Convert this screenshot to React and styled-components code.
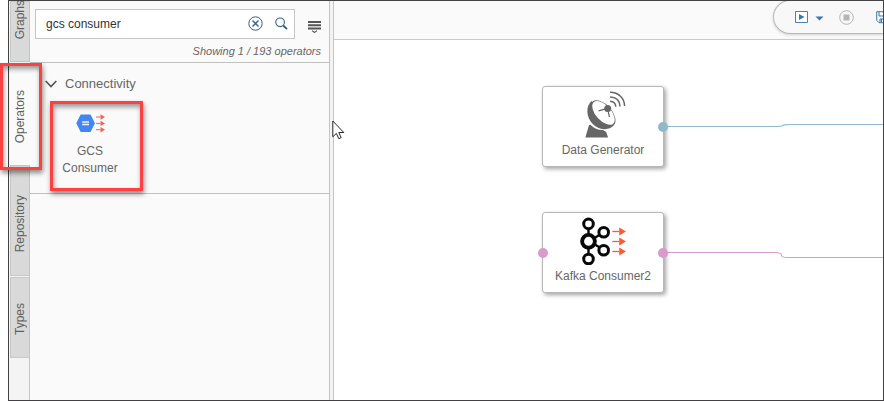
import React from "react";
import styled, { createGlobalStyle } from "styled-components";

const GlobalStyle = createGlobalStyle`
  * { box-sizing: border-box; }
  body { margin: 0; background: #fff; overflow: hidden; font-family: "Liberation Sans", Arial, sans-serif; color: #666; }
  svg { display: block; }
`;

const Page = styled.div`
  position: relative;
  width: 884px;
  height: 401px;
  padding-left: 8px;
  overflow: hidden;
`;

const Frame = styled.main`
  display: flex;
  height: 401px;
  border: 1px solid #434144;
  background: #fff;
  overflow: hidden;
`;

const TabRail = styled.nav`
  display: flex;
  flex-direction: column;
  width: 21px;
  padding-left: 1px;
  background: #f4f4f4;
  border-right: 1px solid #c4c4c4;
`;

const Tab = styled.div`
  display: flex;
  align-items: flex-end;
  justify-content: center;
  flex: none;
  height: ${(p) => p.$height}px;
  margin-bottom: ${(p) => p.$gap || 0}px;
  margin-right: ${(p) => (p.$active ? -1 : 0)}px;
  padding-bottom: ${(p) => p.$inset}px;
  background: ${(p) => (p.$active ? "#fafafa" : "#d9d9d9")};
  border: solid #c8c8c8;
  border-width: ${(p) => (p.$active ? "0" : "1px 0 1px 1px")};
  font-size: 12px;
  line-height: 19px;
  color: #5f5f5f;

  span { writing-mode: vertical-rl; transform: rotate(180deg); white-space: nowrap; }
`;

const Panel = styled.aside`
  display: flex;
  flex-direction: column;
  width: 299px;
  background: #fafafa;
`;

const PanelHeader = styled.header`
  height: 62px;
  padding: 8px 8px 0 5px;
  border-bottom: 1px solid #c0c0c0;
`;

const SearchRow = styled.div`
  display: flex;
  align-items: center;
`;

const SearchBox = styled.div`
  display: flex;
  align-items: center;
  width: 260px;
  height: 30px;
  padding: 0 6px 1px 10px;
  background: #fff;
  border: 1px solid #c6c6c6;
  font-size: 12px;
  color: #333;

  span { flex: 1; }
  svg + svg { margin-left: 11px; }
`;

const MenuButton = styled.div`
  margin: 5px 0 0 13px;
`;

const ResultCount = styled.div`
  margin-top: 5px;
  text-align: right;
  font-size: 11px;
  font-style: italic;
  line-height: 14px;
  white-space: nowrap;
`;

const Category = styled.section`
  height: 131px;
  border-bottom: 1px solid #c0c0c0;
`;

const CategoryTitle = styled.div`
  display: flex;
  align-items: center;
  height: 41px;
  padding-left: 15px;
  gap: 8px;
  font-size: 13px;
`;

const Operator = styled.div`
  display: flex;
  flex-direction: column;
  align-items: center;
  width: 82px;
  margin-left: 19px;
  padding-top: 10px;
`;

const OperatorName = styled.div`
  margin-top: 10px;
  font-size: 12px;
  line-height: 17px;
  text-align: center;
`;

const Splitter = styled.div`
  flex: none;
  width: 5px;
  background: #f3f3f3;
  border: solid #c4c4c4;
  border-width: 0 1px;
`;

const Workspace = styled.section`
  flex: 1;
  display: flex;
  flex-direction: column;
  min-width: 0;
`;

const TopBar = styled.div`
  display: flex;
  justify-content: flex-end;
  height: 39px;
  background: #fafafa;
  border-bottom: 1px solid #cacaca;
`;

const ActionPill = styled.div`
  display: flex;
  align-items: flex-start;
  width: 110px;
  height: 34px;
  margin-top: -1px;
  padding: 10px 0 0 21px;
  background: #f8f8f8;
  border: solid #b8b8b8;
  border-width: 1px 0 1px 1px;
  border-radius: 17px 0 0 17px;
  box-shadow: 0 1px 3px rgba(0, 0, 0, 0.16);
  overflow: hidden;
  svg { flex: none; }
`;

const Caret = styled.svg` margin: 5px 0 0 7px; `;
const StopIcon = styled.svg` margin: -1px 0 0 15px; `;
const SaveIcon = styled.svg` margin: 0 0 0 22px; `;

const Canvas = styled.div`
  position: relative;
  flex: 1;
  overflow: hidden;
`;

const Wires = styled.svg`
  position: absolute;
  inset: 0;
`;

const Node = styled.article`
  position: absolute;
  left: 208px;
  top: ${(p) => p.$top}px;
  display: flex;
  flex-direction: column;
  align-items: center;
  width: 122px;
  height: 81px;
  padding-top: 4px;
  background: #fff;
  border: 1px solid #b7b7b7;
  border-radius: 3px;
  box-shadow: 2px 2px 4px rgba(0, 0, 0, 0.36);
`;

const NodeLabel = styled.div`
  margin-top: 3px;
  font-size: 12px;
  line-height: 16px;
  white-space: nowrap;
`;

const Port = styled.i`
  position: absolute;
  top: 35px;
  left: ${(p) => (p.$side === "in" ? "-5px" : "115px")};
  width: 10px;
  height: 10px;
  border-radius: 50%;
  background: ${(p) => p.$color};
`;

const Callout = styled.div`
  position: absolute;
  left: ${(p) => p.$x}px;
  top: ${(p) => p.$y}px;
  width: ${(p) => p.$w}px;
  height: ${(p) => p.$h}px;
  border: 3px solid #fc4141;
  box-shadow: 1px 3px 5px rgba(0, 0, 0, 0.45), inset 1px 3px 5px rgba(0, 0, 0, 0.4);
`;

const Pointer = styled.svg`
  position: absolute;
  left: 332px;
  top: 120px;
`;

const ArrowTrio = ({ x, ys, length, head, color, weight }) => (
  <g stroke={color} fill={color} strokeWidth={weight}>
    {ys.map((y) => (
      <React.Fragment key={y}>
        <path d={`M${x} ${y}h${length - head}`} />
        <path stroke="none" d={`M${x + length - head} ${y - head * 0.6}L${x + length} ${y}L${x + length - head} ${y + head * 0.6}z`} />
      </React.Fragment>
    ))}
  </g>
);

const ClearIcon = () => (
  <svg width="15" height="15" viewBox="0 0 15 15" fill="none" stroke="#346187">
    <circle cx="7.5" cy="7.5" r="6.7" />
    <path strokeWidth="1.3" d="M4.5 4.5l6 6m0-6l-6 6" />
  </svg>
);

const SearchIcon = () => (
  <svg width="14" height="14" viewBox="0 0 14 14" fill="none" stroke="#346187">
    <circle cx="6.1" cy="5.3" r="4.3" strokeWidth="1.1" />
    <path strokeWidth="1.9" d="M9.2 8.5l3.8 3.6" />
  </svg>
);

const MenuIcon = () => (
  <svg width="13" height="13" viewBox="0 0 13 13" fill="none" stroke="#555">
    <path strokeWidth="2" d="M0 2h13M0 5.2h13M0 8.4h13" />
    <path strokeWidth="1.1" d="M4 10.6l2.5 1.9L9 10.6" />
  </svg>
);

const GcsIcon = () => (
  <svg width="29" height="19" viewBox="0 0 29 19">
    <path fill="#4285f4" stroke="#4285f4" strokeWidth="1.2" strokeLinejoin="round" d="M5.1 1.1h9l4.2 8.2-4.2 8.2h-9L.9 9.3z" />
    <path d="M6.2 8h6.8M6.2 10.6h6.8" stroke="#f1f6ff" strokeWidth="1.5" />
    <ArrowTrio x={20} ys={[3, 9.4, 15.7]} length={9} head={4.5} color="#fb6055" weight={1} />
  </svg>
);

const DishIcon = () => (
  <svg width="40" height="48" viewBox="0 0 40 48" overflow="visible">
    <path fill="#666" d="M2.4 46.6L6 34.1l1.4-.3c3.4 3.8 8.2 5.4 12.6 5.2l3.2 1.9 1.9 5.7z" />
    <path fill="#666" d="M8.6 9.9C2.5 15 3 26.5 10 33.2c6.6 6.4 16.4 6.3 20.6 1.4z" />
    <ellipse cx="20" cy="22.5" rx="8.9" ry="15.9" transform="rotate(-42 20 22.5)" fill="#666" />
    <ellipse cx="20.5" cy="21.9" rx="7.6" ry="14.5" transform="rotate(-42 20.5 21.9)" fill="#fff" />
    <path d="M15.6 19.9l9-2.6M24.7 17.5l1.7 8.7" stroke="#666" strokeWidth="1.2" />
    <circle cx="24.7" cy="17.6" r="3.5" fill="#666" />
    <g fill="none" stroke="#666" strokeWidth="1.5">
      <path d="M27 10.3c3.5.2 5.6 2.2 5.8 5.4M27 6c6.3.1 9.8 3.7 10 9.5M27 1.3c8.7.2 14.4 5.6 14.6 13.8" />
    </g>
  </svg>
);

const KafkaIcon = () => (
  <svg width="46" height="48" viewBox="0 0 46 48">
    <g fill="none" stroke="#080808">
      <path strokeWidth="2.4" d="M8.5 11v26M14 21.3l5-3M14 27l5 3" />
      <circle cx="8.5" cy="24.3" r="6.4" strokeWidth="3.9" fill="#fff" />
      <circle cx="8.5" cy="6.9" r="4.8" strokeWidth="3" fill="#fff" />
      <circle cx="8.5" cy="42" r="4.8" strokeWidth="3" fill="#fff" />
      <circle cx="23.7" cy="15.3" r="4.8" strokeWidth="3" fill="#fff" />
      <circle cx="23.7" cy="33.2" r="4.8" strokeWidth="3" fill="#fff" />
    </g>
    <ArrowTrio x={32.3} ys={[14.5, 24.5, 34.5]} length={13.7} head={6.8} color="#ff5b2e" weight={1.3} />
  </svg>
);

export default function App() {
  return (
    <>
      <GlobalStyle />
      <Page>
        <Frame>
          <TabRail>
            <Tab $height={61} $inset={22}><span>Graphs</span></Tab>
            <Tab $active $height={103} $inset={22}><span>Operators</span></Tab>
            <Tab $height={111} $gap={1} $inset={23}><span>Repository</span></Tab>
            <Tab $height={81} $inset={22}><span>Types</span></Tab>
          </TabRail>
          <Panel>
            <PanelHeader>
              <SearchRow>
                <SearchBox><span>gcs consumer</span><ClearIcon /><SearchIcon /></SearchBox>
                <MenuButton><MenuIcon /></MenuButton>
              </SearchRow>
              <ResultCount>Showing 1 / 193 operators</ResultCount>
            </PanelHeader>
            <Category>
              <CategoryTitle>
                <svg width="12" height="8" viewBox="0 0 12 8" fill="none" stroke="#555" strokeWidth="1.7"><path d="M.7 1L6 6.5 11.3 1" /></svg>
                Connectivity
              </CategoryTitle>
              <Operator>
                <GcsIcon />
                <OperatorName>GCS<br />Consumer</OperatorName>
              </Operator>
            </Category>
          </Panel>
          <Splitter />
          <Workspace>
            <TopBar>
              <ActionPill>
                <svg width="13" height="12" viewBox="0 0 13 12"><path d="M.5.5h12v11H.5z" fill="#fff" stroke="#4684b5" /><path d="M4 3l5.5 3L4 9z" fill="#3977ae" /></svg>
                <Caret width="9" height="5" viewBox="0 0 9 5"><path d="M.5.5h8l-4 4z" fill="#3977ae" /></Caret>
                <StopIcon width="15" height="15" viewBox="0 0 15 15"><circle cx="7.5" cy="7.5" r="6.8" fill="none" stroke="#b4b4b4" /><path d="M4.5 4.5h6v6h-6z" fill="#b4b4b4" /></StopIcon>
                <SaveIcon width="12" height="13" viewBox="0 0 12 13" fill="none" stroke="#3977ae"><path d="M.7.7h11v11H3L.7 9.3zM3 1v4h7V1M4 12V8h6M5.5 8v3" /></SaveIcon>
              </ActionPill>
            </TopBar>
            <Canvas>
              <Wires width="549" height="360" viewBox="334 40 549 360" fill="none">
                <path stroke="#92bac8" strokeWidth="1.2" d="M663 126.5H778Q783 126 784 124.8Q787 124.4 792 124.5H883" />
                <path stroke="#d99bcb" strokeWidth="1.2" d="M663 252.5H775Q781 252.5 781.5 255Q782 257.5 787 257.5H883" />
              </Wires>
              <Node $top={46}>
                <DishIcon />
                <NodeLabel>Data Generator</NodeLabel>
                <Port $color="#92b9c8" />
              </Node>
              <Node $top={172}>
                <KafkaIcon />
                <NodeLabel>Kafka Consumer2</NodeLabel>
                <Port $side="in" $color="#d99bcb" />
                <Port $color="#d99bcb" />
              </Node>
            </Canvas>
          </Workspace>
        </Frame>
        <Callout $x={0} $y={63} $w={42} $h={107} />
        <Callout $x={50} $y={101} $w={93} $h={90} />
        <Pointer width="13" height="20" viewBox="0 0 13 20">
          <path d="M.8 1v15.8l3.6-3.4 2.4 5.3 2.4-1-2.4-5.2h5z" fill="#fff" stroke="#24242c" />
        </Pointer>
      </Page>
    </>
  );
}
